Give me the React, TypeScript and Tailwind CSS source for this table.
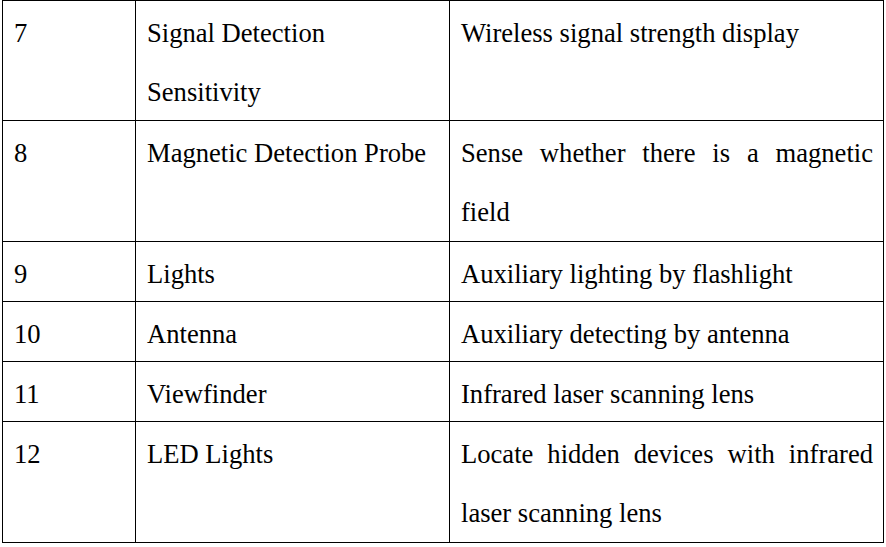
const rows = [
  { no: "7", name: "Signal Detection Sensitivity", desc: "Wireless signal strength display", h: "h-[120px]" },
  { no: "8", name: "Magnetic Detection Probe", desc: "Sense whether there is a magnetic field", h: "h-[121px]" },
  { no: "9", name: "Lights", desc: "Auxiliary lighting by flashlight", h: "h-[60px]" },
  { no: "10", name: "Antenna", desc: "Auxiliary detecting by antenna", h: "h-[60px]" },
  { no: "11", name: "Viewfinder", desc: "Infrared laser scanning lens", h: "h-[60px]" },
  { no: "12", name: "LED Lights", desc: "Locate hidden devices with infrared laser scanning lens", h: "h-[121px]" },
];

function Cell({ children, justify }: { children: React.ReactNode; justify?: boolean }) {
  return (
    <td className="border border-black align-top p-0 pl-[11px] pr-[10px]">
      <div className={`pt-[3px] -mb-[3px] ${justify ? "text-justify" : ""}`}>{children}</div>
    </td>
  );
}

export default function App() {
  return (
    <div className="w-[886px] h-[547px] bg-white pl-[2px] text-black" style={{ fontFamily: '"Liberation Serif", "Times New Roman", serif' }}>
      <table className="border-collapse table-fixed w-[881px] text-[26.6px] leading-[59px]">
        <colgroup>
          <col className="w-[133px]" />
          <col className="w-[314px]" />
          <col className="w-[434px]" />
        </colgroup>
        <tbody>
          {rows.map((r) => (
            <tr key={r.no} className={r.h}>
              <Cell>{r.no}</Cell>
              <Cell>{r.name}</Cell>
              <Cell justify>{r.desc}</Cell>
            </tr>
          ))}
        </tbody>
      </table>
    </div>
  );
}
